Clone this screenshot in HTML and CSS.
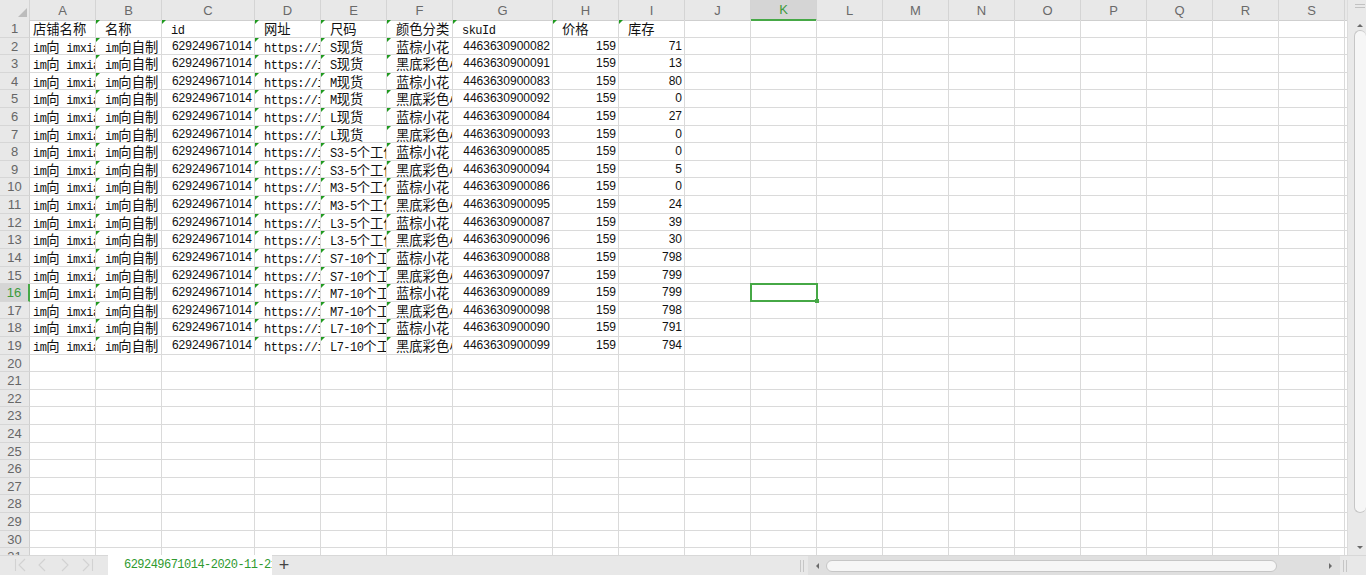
FILE: index.html
```html
<!DOCTYPE html>
<html lang="zh">
<head>
<meta charset="utf-8">
<title>629249671014-2020-11-21</title>
<link rel="stylesheet" href="styles.css">
</head>
<body>
<div class="app">
  <div class="main">
    <div class="sheet">
      <div class="hdr">
        <div class="corner"><svg width="30" height="20" viewBox="0 0 30 20"><polygon points="27,8 27,17 18,17" fill="#bcbcbc"/></svg></div>
        <div>A</div><div>B</div><div>C</div><div>D</div><div>E</div><div>F</div><div>G</div><div>H</div><div>I</div>
        <div>J</div><div class="on">K</div><div>L</div><div>M</div><div>N</div><div>O</div><div>P</div><div>Q</div><div>R</div><div>S</div><div></div>
      </div>

      <div class="row"><div class="rh">1</div><div class="c a">店铺名称</div><div class="c t">名称</div><div class="c t"><span class="m">id</span></div><div class="c t">网址</div><div class="c t">尺码</div><div class="c t">颜色分类</div><div class="c t"><span class="m">skuId</span></div><div class="c t">价格</div><div class="c t">库存</div><div class="fill"></div></div>
      <div class="row"><div class="rh">2</div><div class="c a"><span class="m">im</span>向<span class="m"> imxiang</span></div><div class="c t"><span class="m">im</span>向自制</div><div class="c n">629249671014</div><div class="c t"><span class="m">https://item.taobao.com</span></div><div class="c t"><span class="m">S</span>现货</div><div class="c t">蓝棕小花</div><div class="c n">4463630900082</div><div class="c n">159</div><div class="c n">71</div><div class="fill"></div></div>
      <div class="row"><div class="rh">3</div><div class="c a"><span class="m">im</span>向<span class="m"> imxiang</span></div><div class="c t"><span class="m">im</span>向自制</div><div class="c n">629249671014</div><div class="c t"><span class="m">https://item.taobao.com</span></div><div class="c t"><span class="m">S</span>现货</div><div class="c t">黑底彩色小花</div><div class="c n">4463630900091</div><div class="c n">159</div><div class="c n">13</div><div class="fill"></div></div>
      <div class="row"><div class="rh">4</div><div class="c a"><span class="m">im</span>向<span class="m"> imxiang</span></div><div class="c t"><span class="m">im</span>向自制</div><div class="c n">629249671014</div><div class="c t"><span class="m">https://item.taobao.com</span></div><div class="c t"><span class="m">M</span>现货</div><div class="c t">蓝棕小花</div><div class="c n">4463630900083</div><div class="c n">159</div><div class="c n">80</div><div class="fill"></div></div>
      <div class="row"><div class="rh">5</div><div class="c a"><span class="m">im</span>向<span class="m"> imxiang</span></div><div class="c t"><span class="m">im</span>向自制</div><div class="c n">629249671014</div><div class="c t"><span class="m">https://item.taobao.com</span></div><div class="c t"><span class="m">M</span>现货</div><div class="c t">黑底彩色小花</div><div class="c n">4463630900092</div><div class="c n">159</div><div class="c n">0</div><div class="fill"></div></div>
      <div class="row"><div class="rh">6</div><div class="c a"><span class="m">im</span>向<span class="m"> imxiang</span></div><div class="c t"><span class="m">im</span>向自制</div><div class="c n">629249671014</div><div class="c t"><span class="m">https://item.taobao.com</span></div><div class="c t"><span class="m">L</span>现货</div><div class="c t">蓝棕小花</div><div class="c n">4463630900084</div><div class="c n">159</div><div class="c n">27</div><div class="fill"></div></div>
      <div class="row"><div class="rh">7</div><div class="c a"><span class="m">im</span>向<span class="m"> imxiang</span></div><div class="c t"><span class="m">im</span>向自制</div><div class="c n">629249671014</div><div class="c t"><span class="m">https://item.taobao.com</span></div><div class="c t"><span class="m">L</span>现货</div><div class="c t">黑底彩色小花</div><div class="c n">4463630900093</div><div class="c n">159</div><div class="c n">0</div><div class="fill"></div></div>
      <div class="row"><div class="rh">8</div><div class="c a"><span class="m">im</span>向<span class="m"> imxiang</span></div><div class="c t"><span class="m">im</span>向自制</div><div class="c n">629249671014</div><div class="c t"><span class="m">https://item.taobao.com</span></div><div class="c t"><span class="m">S3-5</span>个工作日</div><div class="c t">蓝棕小花</div><div class="c n">4463630900085</div><div class="c n">159</div><div class="c n">0</div><div class="fill"></div></div>
      <div class="row"><div class="rh">9</div><div class="c a"><span class="m">im</span>向<span class="m"> imxiang</span></div><div class="c t"><span class="m">im</span>向自制</div><div class="c n">629249671014</div><div class="c t"><span class="m">https://item.taobao.com</span></div><div class="c t"><span class="m">S3-5</span>个工作日</div><div class="c t">黑底彩色小花</div><div class="c n">4463630900094</div><div class="c n">159</div><div class="c n">5</div><div class="fill"></div></div>
      <div class="row"><div class="rh">10</div><div class="c a"><span class="m">im</span>向<span class="m"> imxiang</span></div><div class="c t"><span class="m">im</span>向自制</div><div class="c n">629249671014</div><div class="c t"><span class="m">https://item.taobao.com</span></div><div class="c t"><span class="m">M3-5</span>个工作日</div><div class="c t">蓝棕小花</div><div class="c n">4463630900086</div><div class="c n">159</div><div class="c n">0</div><div class="fill"></div></div>
      <div class="row"><div class="rh">11</div><div class="c a"><span class="m">im</span>向<span class="m"> imxiang</span></div><div class="c t"><span class="m">im</span>向自制</div><div class="c n">629249671014</div><div class="c t"><span class="m">https://item.taobao.com</span></div><div class="c t"><span class="m">M3-5</span>个工作日</div><div class="c t">黑底彩色小花</div><div class="c n">4463630900095</div><div class="c n">159</div><div class="c n">24</div><div class="fill"></div></div>
      <div class="row"><div class="rh">12</div><div class="c a"><span class="m">im</span>向<span class="m"> imxiang</span></div><div class="c t"><span class="m">im</span>向自制</div><div class="c n">629249671014</div><div class="c t"><span class="m">https://item.taobao.com</span></div><div class="c t"><span class="m">L3-5</span>个工作日</div><div class="c t">蓝棕小花</div><div class="c n">4463630900087</div><div class="c n">159</div><div class="c n">39</div><div class="fill"></div></div>
      <div class="row"><div class="rh">13</div><div class="c a"><span class="m">im</span>向<span class="m"> imxiang</span></div><div class="c t"><span class="m">im</span>向自制</div><div class="c n">629249671014</div><div class="c t"><span class="m">https://item.taobao.com</span></div><div class="c t"><span class="m">L3-5</span>个工作日</div><div class="c t">黑底彩色小花</div><div class="c n">4463630900096</div><div class="c n">159</div><div class="c n">30</div><div class="fill"></div></div>
      <div class="row"><div class="rh">14</div><div class="c a"><span class="m">im</span>向<span class="m"> imxiang</span></div><div class="c t"><span class="m">im</span>向自制</div><div class="c n">629249671014</div><div class="c t"><span class="m">https://item.taobao.com</span></div><div class="c t"><span class="m">S7-10</span>个工作日</div><div class="c t">蓝棕小花</div><div class="c n">4463630900088</div><div class="c n">159</div><div class="c n">798</div><div class="fill"></div></div>
      <div class="row"><div class="rh">15</div><div class="c a"><span class="m">im</span>向<span class="m"> imxiang</span></div><div class="c t"><span class="m">im</span>向自制</div><div class="c n">629249671014</div><div class="c t"><span class="m">https://item.taobao.com</span></div><div class="c t"><span class="m">S7-10</span>个工作日</div><div class="c t">黑底彩色小花</div><div class="c n">4463630900097</div><div class="c n">159</div><div class="c n">799</div><div class="fill"></div></div>
      <div class="row"><div class="rh on">16</div><div class="c a"><span class="m">im</span>向<span class="m"> imxiang</span></div><div class="c t"><span class="m">im</span>向自制</div><div class="c n">629249671014</div><div class="c t"><span class="m">https://item.taobao.com</span></div><div class="c t"><span class="m">M7-10</span>个工作日</div><div class="c t">蓝棕小花</div><div class="c n">4463630900089</div><div class="c n">159</div><div class="c n">799</div><div class="fill sel"><span class="selbox"></span></div></div>
      <div class="row"><div class="rh">17</div><div class="c a"><span class="m">im</span>向<span class="m"> imxiang</span></div><div class="c t"><span class="m">im</span>向自制</div><div class="c n">629249671014</div><div class="c t"><span class="m">https://item.taobao.com</span></div><div class="c t"><span class="m">M7-10</span>个工作日</div><div class="c t">黑底彩色小花</div><div class="c n">4463630900098</div><div class="c n">159</div><div class="c n">798</div><div class="fill"></div></div>
      <div class="row"><div class="rh">18</div><div class="c a"><span class="m">im</span>向<span class="m"> imxiang</span></div><div class="c t"><span class="m">im</span>向自制</div><div class="c n">629249671014</div><div class="c t"><span class="m">https://item.taobao.com</span></div><div class="c t"><span class="m">L7-10</span>个工作日</div><div class="c t">蓝棕小花</div><div class="c n">4463630900090</div><div class="c n">159</div><div class="c n">791</div><div class="fill"></div></div>
      <div class="row"><div class="rh">19</div><div class="c a"><span class="m">im</span>向<span class="m"> imxiang</span></div><div class="c t"><span class="m">im</span>向自制</div><div class="c n">629249671014</div><div class="c t"><span class="m">https://item.taobao.com</span></div><div class="c t"><span class="m">L7-10</span>个工作日</div><div class="c t">黑底彩色小花</div><div class="c n">4463630900099</div><div class="c n">159</div><div class="c n">794</div><div class="fill"></div></div>
      <div class="row"><div class="rh">20</div><div></div><div></div><div></div><div></div><div></div><div></div><div></div><div></div><div></div><div class="fill"></div></div>
      <div class="row"><div class="rh">21</div><div></div><div></div><div></div><div></div><div></div><div></div><div></div><div></div><div></div><div class="fill"></div></div>
      <div class="row"><div class="rh">22</div><div></div><div></div><div></div><div></div><div></div><div></div><div></div><div></div><div></div><div class="fill"></div></div>
      <div class="row"><div class="rh">23</div><div></div><div></div><div></div><div></div><div></div><div></div><div></div><div></div><div></div><div class="fill"></div></div>
      <div class="row"><div class="rh">24</div><div></div><div></div><div></div><div></div><div></div><div></div><div></div><div></div><div></div><div class="fill"></div></div>
      <div class="row"><div class="rh">25</div><div></div><div></div><div></div><div></div><div></div><div></div><div></div><div></div><div></div><div class="fill"></div></div>
      <div class="row"><div class="rh">26</div><div></div><div></div><div></div><div></div><div></div><div></div><div></div><div></div><div></div><div class="fill"></div></div>
      <div class="row"><div class="rh">27</div><div></div><div></div><div></div><div></div><div></div><div></div><div></div><div></div><div></div><div class="fill"></div></div>
      <div class="row"><div class="rh">28</div><div></div><div></div><div></div><div></div><div></div><div></div><div></div><div></div><div></div><div class="fill"></div></div>
      <div class="row"><div class="rh">29</div><div></div><div></div><div></div><div></div><div></div><div></div><div></div><div></div><div></div><div class="fill"></div></div>
      <div class="row"><div class="rh">30</div><div></div><div></div><div></div><div></div><div></div><div></div><div></div><div></div><div></div><div class="fill"></div></div>
      <div class="row"><div class="rh">31</div><div></div><div></div><div></div><div></div><div></div><div></div><div></div><div></div><div></div><div class="fill"></div></div>
    </div>
    <div class="vbar">
      <div class="vgrip"><i></i><i></i></div>
      <div class="varrow"><span class="tri up"></span></div>
      <div class="vthumb"></div>
      <div class="vspace"></div>
      <div class="varrow"><span class="tri down"></span></div>
    </div>
  </div>
  <div class="tabbar">
    <div class="nav">
      <svg width="108" height="20" viewBox="0 0 108 20">
        <g fill="none" stroke="#d2d2d2" stroke-width="1.1">
          <line x1="15.5" y1="4" x2="15.5" y2="16"/><polyline points="25,4 19,10 25,16"/>
          <polyline points="45,4 39,10 45,16"/>
          <polyline points="62,4 68,10 62,16"/>
          <polyline points="83,4 89,10 83,16"/><line x1="92.5" y1="4" x2="92.5" y2="16"/>
        </g>
      </svg>
    </div>
    <div class="tab"><span class="tabname">629249671014-2020-11-21</span></div>
    <div class="plus">+</div>
    <div class="gap"></div>
    <div class="hgrip"><i></i><i></i></div>
    <div class="htrack">
      <div class="harrow"><span class="tri left"></span></div>
      <div class="hthumb"></div>
      <div class="hspace"></div>
      <div class="harrow"><span class="tri right"></span></div>
    </div>
    <div class="hgrip2"><i></i><i></i></div>
    <div class="bcorner"></div>
  </div>
</div>
</body>
</html>
```

FILE: styles.css
```css
* { box-sizing: border-box; }
html, body { margin: 0; padding: 0; }
body {
  width: 1366px;
  height: 575px;
  overflow: hidden;
  background: #ffffff;
  font-family: "Liberation Sans", Arial, sans-serif;
}
.app { display: flex; flex-direction: column; width: 1366px; height: 575px; }
.main { display: flex; height: 555px; }
.sheet { flex: 0 0 1347px; height: 555px; overflow: hidden; position: relative; }

/* column header */
.hdr {
  display: grid;
  grid-template-columns: 30px 66px 66px 93px 66px 66px 66px 100px 66px 66px repeat(10, 66px) 1fr;
  height: 20px;
  background: #e8e8e8;
}
.hdr > div {
  border-right: 1px solid #d4d4d4;
  border-bottom: 1px solid #cfcfcf;
  display: flex;
  align-items: center;
  justify-content: center;
  font-size: 13px;
  color: #6a6a6a;
}
.hdr > div:last-child { border-right: none; }
.hdr .corner { display: block; }
.hdr .corner svg { display: block; }
.hdr .on {
  background: #d5d5d5;
  color: #3c9b3c;
  border-bottom: 2px solid #46a846;
}

/* data rows */
.row {
  display: grid;
  grid-template-columns: 30px 66px 66px 93px 66px 66px 66px 100px 66px 66px 1fr;
  height: 17.62px;
}
.row > div {
  border-right: 1px solid #dadada;
  border-bottom: 1px solid #dadada;
  overflow: hidden;
  white-space: nowrap;
  position: relative;
}
.rh {
  background: #e8e8e8;
  color: #666;
  font: 13px/17px "Liberation Sans", Arial, sans-serif;
  text-align: center;
  border-right-color: #cfcfcf !important;
  border-bottom-color: #d6d6d6 !important;
}
.rh.on {
  background: #d5d5d5;
  color: #3c9b3c;
  border-right: 2px solid #46a846 !important;
}
.c {
  font: 13.3px/17px "Noto Sans CJK SC", sans-serif;
  color: #111;
}
.c .m {
  font-family: "Liberation Mono", monospace;
  font-size: 12px;
  letter-spacing: -0.53px;
}
.a { padding-left: 3px; }
.t { padding-left: 9px; }
.t::before {
  content: "";
  position: absolute;
  top: 0;
  left: 0;
  border-top: 4px solid #1f9a1f;
  border-right: 4px solid transparent;
}
.n {
  font: 12px/17px "Liberation Sans", Arial, sans-serif;
  text-align: right;
  padding-right: 2px;
}
.row > .fill {
  border-right: none;
  background: repeating-linear-gradient(90deg, transparent 0, transparent 65px, #dadada 65px, #dadada 66px);
}
.row > .fill.sel { overflow: visible; z-index: 2; }
.selbox {
  position: absolute;
  left: 65px;
  top: -1px;
  width: 68px;
  height: 19px;
  border: 2px solid #46a846;
}
.selbox::after {
  content: "";
  position: absolute;
  right: -3px;
  bottom: -3px;
  width: 4px;
  height: 4px;
  background: #46a846;
}

/* vertical scrollbar */
.vbar {
  flex: 1;
  background: #e9e9e9;
  display: flex;
  flex-direction: column;
  align-items: flex-end;
  border-left: 1px solid #dcdcdc;
}
.vgrip {
  width: 12px;
  height: 20px;
  display: flex;
  flex-direction: column;
  justify-content: flex-start;
  padding-top: 4px;
  gap: 2px;
  align-items: center;
}
.vgrip i { display: block; width: 10px; height: 1px; background: #c2c2c2; }
.varrow {
  width: 12px;
  height: 10px;
  display: flex;
  align-items: center;
  justify-content: center;
}
.vthumb {
  width: 12px;
  height: 483px;
  background: #f6f6f6;
  border: 1px solid #c6c6c6;
  border-right: none;
  border-radius: 6px;
}
.vspace { flex: 1; }
.vbar .varrow:last-child { height: 12px; margin-bottom: 2px; }
.tri { display: block; width: 0; height: 0; }
.tri.up { border-left: 3px solid transparent; border-right: 3px solid transparent; border-bottom: 3px solid #6a6a6a; }
.tri.down { border-left: 3px solid transparent; border-right: 3px solid transparent; border-top: 3px solid #6a6a6a; }
.tri.left { border-top: 3px solid transparent; border-bottom: 3px solid transparent; border-right: 3px solid #6a6a6a; }
.tri.right { border-top: 3px solid transparent; border-bottom: 3px solid transparent; border-left: 3px solid #6a6a6a; }

/* bottom sheet-tab bar */
.tabbar {
  display: flex;
  height: 20px;
  background: #e8e8e8;
  border-top: 1px solid #d8d8d8;
}
.nav { width: 108px; }
.nav svg { display: block; margin-top: -1px; }
.tab {
  width: 164px;
  background: #ffffff;
  margin-top: -1px;
  padding-left: 16px;
  overflow: hidden;
  white-space: nowrap;
  display: flex;
  align-items: center;
}
.tabname {
  font-family: "Liberation Mono", monospace;
  font-size: 12px;
  letter-spacing: -0.53px;
  color: #2f9a2f;
}
.plus {
  width: 24px;
  font: 18px/18px "Liberation Sans", Arial, sans-serif;
  color: #444;
  text-align: center;
}
.gap { flex: 1; }
.hgrip, .hgrip2 {
  display: flex;
  align-items: center;
  justify-content: center;
  gap: 2px;
}
.hgrip { width: 12px; }
.hgrip2 { width: 9px; }
.hgrip i, .hgrip2 i { display: block; width: 1px; height: 12px; background: #c6c6c6; }
.htrack {
  width: 532px;
  background: #dfdfdf;
  display: flex;
  align-items: center;
}
.harrow {
  width: 18px;
  height: 19px;
  display: flex;
  align-items: center;
  justify-content: center;
}
.hthumb {
  width: 451px;
  height: 12px;
  background: #f6f6f6;
  border: 1px solid #c6c6c6;
  border-radius: 6px;
}
.hspace { flex: 1; }
.htrack .harrow:last-child { width: 20px; }
.bcorner { width: 17px; background: #e8e8e8; }
```
